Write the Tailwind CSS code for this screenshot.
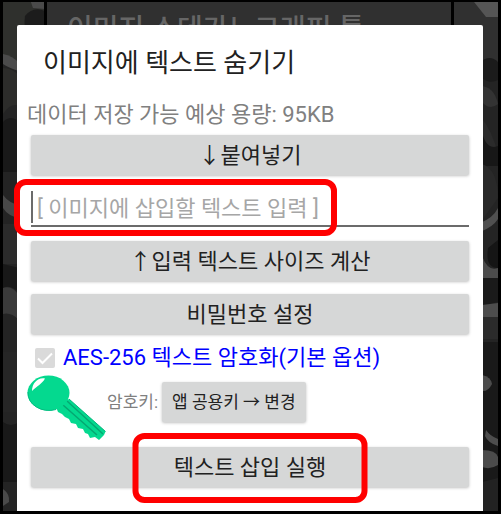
<!DOCTYPE html>
<html lang="ko">
<head>
  <meta charset="UTF-8" />
  <meta name="viewport" content="width=device-width, initial-scale=1.0"/>
  <title>이미지 스테가노그래피 툴</title>
  <script src="https://cdn.jsdelivr.net/npm/@tailwindcss/browser@4"></script>
</head>
<body class="bg-black font-[Roboto,'Noto_Sans_CJK_KR',sans-serif] text-[22px] leading-7 text-[#212121]">
  <div class="relative flex min-h-screen flex-col overflow-hidden border-x-3 border-t-2 border-b-3 border-black bg-[#1f1f1f] pt-[23px] pr-[15px] pl-3.5">

    <!-- Page behind the dialog -->
    <div class="absolute inset-0">
      <svg class="absolute inset-0 h-full w-full" viewBox="0 0 496 509" preserveAspectRatio="none" aria-hidden="true">
        <rect width="496" height="509" fill="#242424"/>
        <path d="M0 0h42v60H0z" fill="#2f302d"/>
        <path d="M28 0h14v7l-12-1z" fill="#4a4a4a"/>
        <path d="M22 14q8-10 20-5v30H26q-6-12-4-25z" fill="#1c1c1c"/>
        <path d="M0 52q10 2 16 9v8Q6 66 0 62z" fill="#4b4b4b"/>
        <path d="M0 66q10 0 16 8v30Q8 100 0 112z" fill="#2c2c2a"/>
        <path d="M0 120q8-8 16 0v50H0z" fill="#191919"/>
        <path d="M0 193q6 8 16 10v13Q5 214 0 206z" fill="#484848"/>
        <path d="M0 222h16v40H0z" fill="#2b2b2b"/>
        <path d="M0 262l16 4v24q-10-8-16-4z" fill="#181818"/>
        <path d="M0 286q10-3 16 8v24Q8 310 0 312z" fill="#3a3a3a"/>
        <path d="M0 350h16v60H0z" fill="#262626"/>
        <path d="M0 420q8 6 16 0v60H0z" fill="#191919"/>
        <path d="M0 487q7 5 6 13l-6 4z" fill="#4a4a4a"/>
        <path d="M448 0h48v60h-48z" fill="#303030"/>
        <path d="M472 0h24v15h-12z" fill="#555"/>
        <path d="M478 60q10-8 18 0v18q-10 5-18-4z" fill="#1b1b1b"/>
        <path d="M478 84q14 0 18 18-10 8-18-5z" fill="#333"/>
        <path d="M478 114q12 14 18 38h-16z" fill="#2b2b2b"/>
        <path d="M478 120q4 30 18 24v20h-16z" fill="#171717"/>
        <path d="M480 162q16 6 16 34l-16 22z" fill="#292929"/>
        <path d="M496 206q-5 10-18 15v9q13-5 18-13z" fill="#505050"/>
        <path d="M480 254q6 16 16 12v10h-16z" fill="#4c4c4c"/>
        <path d="M486 246q-3 20 10 20v-28z" fill="#151515"/>
        <path d="M480 276h16v24l-16 4z" fill="#1a1a1a"/>
        <path d="M480 303l16-2v14h-16z" fill="#4d4d4d"/>
        <path d="M480 315h16v22h-16z" fill="#2b2b2b"/>
        <path d="M480 340h16v169h-16z" fill="#191919"/>
        <path d="M480 373q9 2 10 9-4 8-10 7z" fill="#4b4b4b"/>
        <path d="M484 428q4 6 12 9v7q-10-3-13-10z" fill="#4d4d4d"/>
        <path d="M480 448q14 0 16 7v8q-8 5-16 2z" fill="#4b4b4b"/>
        <path d="M480 480l16-4v33h-16z" fill="#222"/>
      </svg>
      <header class="relative mr-11 ml-[41px] h-full border-x-3 border-black bg-[#303030] px-5 pt-2.5">
        <h1 class="truncate text-[28px] leading-9 font-medium text-[#666]">이미지 스테가노그래피 툴</h1>
      </header>
    </div>

    <!-- Dialog -->
    <main role="dialog" aria-labelledby="dialogTitle" class="relative flex-1 rounded-t-xs bg-white px-3.5 pb-6">
      <h2 id="dialogTitle" class="px-3 pt-5 pb-4 text-[26px] leading-9">이미지에 텍스트 숨기기</h2>
      <p class="-ml-1 pt-1 pb-1.5 text-[#808080]">데이터 저장 가능 예상 용량: 95KB</p>

      <button type="button" class="block h-10 w-full rounded-xs bg-[#d6d7d7] pt-0.5 shadow-[0_1px_3px_rgba(0,0,0,0.25)]">↓붙여넣기</button>

      <div class="relative pt-3 pb-3.5">
        <input type="text" id="secretText" aria-label="이미지에 삽입할 텍스트" placeholder="[ 이미지에 삽입할 텍스트 입력 ]"
               class="block h-10 w-full border-b-2 border-[#6b6b6b] px-1.5 pt-1 placeholder:text-[#a6a6a6] focus:outline-none">
        <span class="absolute top-4 left-0 h-8 w-0.5 bg-[#6b6b6b]"></span>
        <span class="pointer-events-none absolute top-1 -left-[17px] h-[57px] w-[323px] rounded-xl border-6 border-[#f00]"></span>
      </div>

      <div class="space-y-[13px]">
        <button type="button" class="block h-10 w-full rounded-xs bg-[#d6d7d7] pt-0.5 shadow-[0_1px_3px_rgba(0,0,0,0.25)]">↑입력 텍스트 사이즈 계산</button>
        <button type="button" class="block h-10 w-full rounded-xs bg-[#d6d7d7] pt-0.5 shadow-[0_1px_3px_rgba(0,0,0,0.25)]">비밀번호 설정</button>
      </div>

      <div class="flex items-center gap-2 pt-2.5 pl-1">
        <span class="relative size-5">
          <input type="checkbox" id="aesOption" checked disabled class="block size-5 appearance-none rounded-xs bg-[#dadada]">
          <svg class="pointer-events-none absolute inset-0 size-5" viewBox="0 0 20 20" fill="none" stroke="#fff" stroke-width="2" aria-hidden="true">
            <path d="M3 10.5l4.5 4.5L17 5.5"/>
          </svg>
        </span>
        <label for="aesOption" class="text-[#00f]">AES-256 텍스트 암호화(기본 옵션)</label>
      </div>

      <div class="-ml-1 flex items-start pb-1.5">
        <svg class="mt-0.5 h-[67px] w-20 shrink-0" viewBox="0 0 80 67" aria-hidden="true">
          <path d="M42 25L78.500 57.500 77 61 72 66 68 63 63 64 61 60 58 59 56 55 51 54 49 50 44 49 42 45 38 43 35 40 31 38 29 33z" fill="#04d98f"/>
          <path d="M40 27L76 60M36 31L70 61" stroke="#04a872" stroke-width="1.500" fill="none"/>
          <path d="M42 25L78.500 57.500" stroke="#02b57b" stroke-width="1" fill="none"/>
          <ellipse cx="21.500" cy="19" rx="21" ry="17.500" fill="#04d98f"/>
          <path d="M1 18A21 17.500 0 0 0 29 35.500" stroke="#02bd80" stroke-width="1" fill="none"/>
          <path d="M5 17C5 9 11 3 18 4.500 15 10 10 12 5 17z" fill="#fff"/>
        </svg>
        <div class="flex items-center gap-1 pt-2.5 text-[17px] text-[#808080]">
          <label for="changeKey">암호키:</label>
          <button type="button" id="changeKey" class="h-10 rounded-xs bg-[#d6d7d7] px-2.5 text-[#212121] shadow-[0_1px_3px_rgba(0,0,0,0.25)]">앱 공용키 → 변경</button>
        </div>
      </div>

      <div class="relative">
        <button type="button" class="block h-10 w-full rounded-xs bg-[#d6d7d7] pt-0.5 shadow-[0_1px_3px_rgba(0,0,0,0.25)]">텍스트 삽입 실행</button>
        <span class="pointer-events-none absolute -top-3.5 left-1/2 h-[70px] w-[235px] -translate-x-1/2 rounded-xl border-6 border-[#f00]"></span>
      </div>
    </main>
  </div>
</body>
</html>
